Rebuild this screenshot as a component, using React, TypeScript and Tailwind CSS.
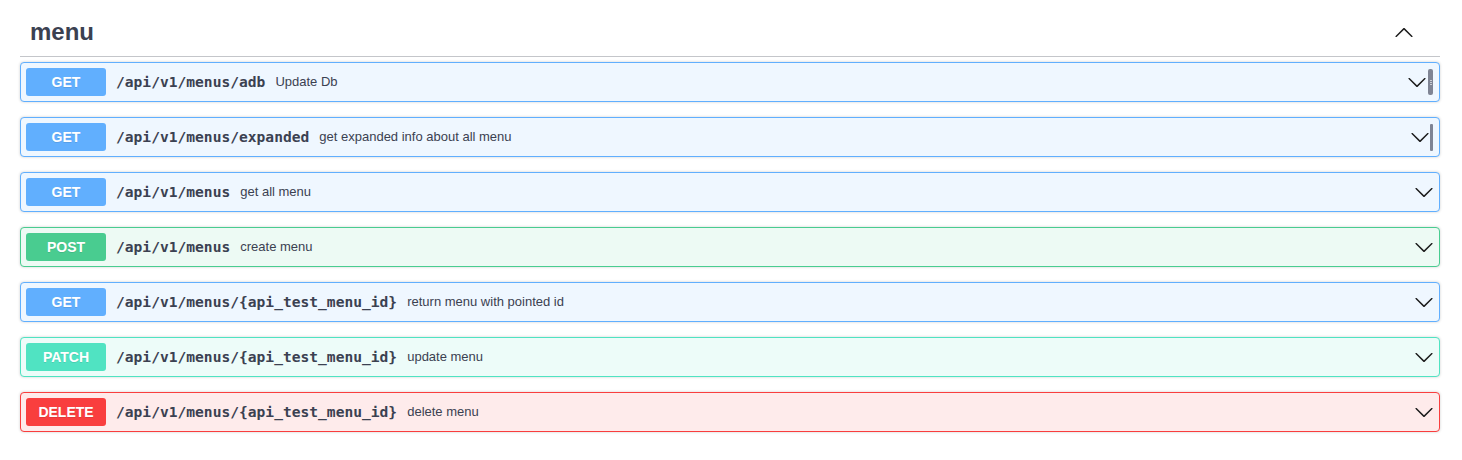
import React from 'react';

type Op = {
  method: string;
  path: string;
  desc: string;
  scroll?: 'wide' | 'thin';
};

const ops: Op[] = [
  { method: 'GET', path: '/api/v1/menus/adb', desc: 'Update Db', scroll: 'wide' },
  { method: 'GET', path: '/api/v1/menus/expanded', desc: 'get expanded info about all menu', scroll: 'thin' },
  { method: 'GET', path: '/api/v1/menus', desc: 'get all menu' },
  { method: 'POST', path: '/api/v1/menus', desc: 'create menu' },
  { method: 'GET', path: '/api/v1/menus/{api_test_menu_id}', desc: 'return menu with pointed id' },
  { method: 'PATCH', path: '/api/v1/menus/{api_test_menu_id}', desc: 'update menu' },
  { method: 'DELETE', path: '/api/v1/menus/{api_test_menu_id}', desc: 'delete menu' },
];

const styles: Record<string, { box: string; badge: string }> = {
  GET: { box: 'border-[#61affe] bg-[#eff7ff]', badge: 'bg-[#61affe]' },
  POST: { box: 'border-[#49cc90] bg-[#edfaf4]', badge: 'bg-[#49cc90]' },
  PATCH: { box: 'border-[#50e3c2] bg-[#edfcf9]', badge: 'bg-[#50e3c2]' },
  DELETE: { box: 'border-[#f93e3e] bg-[#feebeb]', badge: 'bg-[#f93e3e]' },
};

function ArrowDown() {
  return (
    <svg width="20" height="20" viewBox="0 0 20 20" className="fill-[#1b1b1b] shrink-0">
      <path d="M17.418 6.109c.272-.268.709-.268.979 0s.271.701 0 .969l-7.908 7.83c-.27.268-.707.268-.979 0l-7.908-7.83c-.27-.268-.27-.701 0-.969.271-.268.709-.268.979 0L10 13.25l7.418-7.141z" />
    </svg>
  );
}

function ArrowUp() {
  return (
    <svg width="20" height="20" viewBox="0 0 20 20" className="fill-[#1b1b1b] shrink-0">
      <path d="M17.418 14.908c.272.268.709.268.979 0s.271-.701 0-.969l-7.908-7.83c-.27-.268-.707-.268-.979 0l-7.908 7.83c-.27.268-.27.701 0 .969.271.268.709.268.979 0L10 7.767l7.418 7.141z" />
    </svg>
  );
}

function Row({ op }: { op: Op }) {
  const s = styles[op.method];
  return (
    <div className={`mb-[15px] border rounded-[4px] shadow-[0_0_3px_rgba(0,0,0,0.19)] ${s.box}`}>
      <div className="flex items-center p-[5px]">
        <span
          className={`w-[80px] h-[28px] shrink-0 flex items-center justify-center rounded-[3px] text-white text-[14px] font-bold [text-shadow:0_1px_0_rgba(0,0,0,0.1)] ${s.badge}`}
        >
          {op.method}
        </span>
        <span className="px-[10px] font-['DejaVu_Sans_Mono',monospace] text-[14.6px] font-bold text-[#3b4151]">
          {op.path}
        </span>
        <span className="flex-1 text-[13px] text-[#3b4151]">{op.desc}</span>
        <ArrowDown />
        {op.scroll === 'wide' && (
          <div className="ml-[1px] mr-[1px] w-[5px] h-[26px] rounded-[2px] bg-[#7f8494] flex flex-col items-center justify-center gap-[1px]">
            <div className="w-[2px] h-[1px] bg-[#c9ccd3]" />
            <div className="w-[2px] h-[1px] bg-[#c9ccd3]" />
            <div className="w-[2px] h-[1px] bg-[#c9ccd3]" />
          </div>
        )}
        {op.scroll === 'thin' && (
          <div className="ml-[0px] mr-[1px] w-[3px] h-[27px] rounded-[1px] bg-[#7f8494]" />
        )}
      </div>
    </div>
  );
}

export default function App() {
  return (
    <div className="min-h-screen bg-white font-['Liberation_Sans',Arial,sans-serif]">
      <div className="ml-[20px] mr-[22px] pt-[8px]">
        {/* Tag header */}
        <div className="flex items-center justify-between border-b border-[rgba(59,65,81,0.3)] mb-[5px] py-[10px] pl-[10px] pr-[26px]">
          <h4 className="text-[24px] leading-[28px] font-bold text-[#3b4151]">menu</h4>
          <ArrowUp />
        </div>
        {ops.map((op, i) => (
          <Row key={i} op={op} />
        ))}
      </div>
    </div>
  );
}
